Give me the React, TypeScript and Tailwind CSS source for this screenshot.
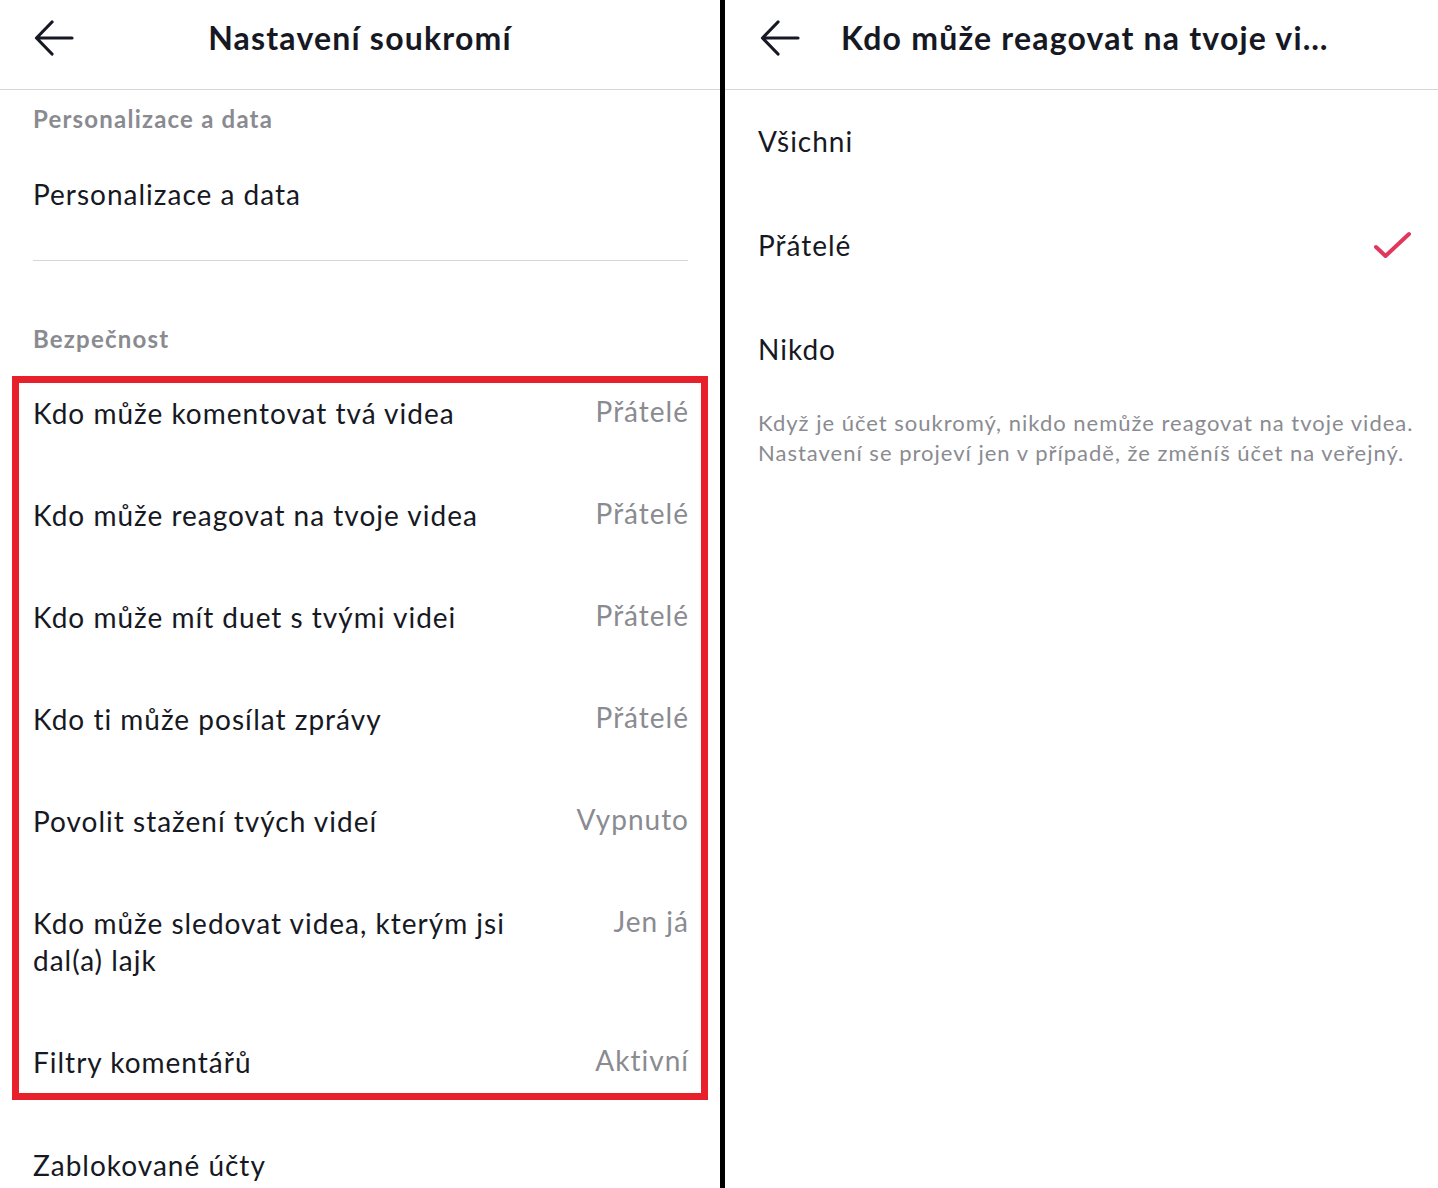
import type { ReactNode } from "react";

const font = { fontFamily: "Lato, 'Noto Sans', sans-serif" };

function BackArrow() {
  return (
    <svg width="40" height="36" viewBox="0 0 40 36" fill="none" aria-hidden="true">
      <path
        d="M38 18H3M18 2L2.5 18L18 34"
        stroke="#161823"
        strokeWidth="3.2"
        strokeLinecap="round"
        strokeLinejoin="round"
      />
    </svg>
  );
}

function Check() {
  return (
    <svg width="40" height="32" viewBox="0 0 40 32" fill="none" aria-hidden="true">
      <path
        d="M4 17L13.5 26L37 4"
        stroke="#e0385c"
        strokeWidth="4"
        strokeLinecap="round"
        strokeLinejoin="round"
      />
    </svg>
  );
}

type Setting = { label: ReactNode; value: string };

const settings: Setting[] = [
  { label: "Kdo může komentovat tvá videa", value: "Přátelé" },
  { label: "Kdo může reagovat na tvoje videa", value: "Přátelé" },
  { label: "Kdo může mít duet s tvými videi", value: "Přátelé" },
  { label: "Kdo ti může posílat zprávy", value: "Přátelé" },
  { label: "Povolit stažení tvých videí", value: "Vypnuto" },
  {
    label: (
      <>
        Kdo může sledovat videa, kterým jsi
        <br />
        dal(a) lajk
      </>
    ),
    value: "Jen já",
  },
  { label: "Filtry komentářů", value: "Aktivní" },
];

const options = [
  { label: "Všichni", checked: false },
  { label: "Přátelé", checked: true },
  { label: "Nikdo", checked: false },
];

function PrivacySettings() {
  return (
    <div className="w-[720px] shrink-0">
      <header className="relative flex h-[90px] items-center justify-center border-b border-[#d6d6d8] pb-[14px]">
        <span className="absolute left-[34px] top-[20px]">
          <BackArrow />
        </span>
        <h1 className="text-[32px] font-bold tracking-[1.2px] text-[#161823]">Nastavení soukromí</h1>
      </header>

      <div className="px-[33px]">
        <p className="pt-[14px] text-[24px] font-bold leading-[30px] tracking-[1.2px] text-[#8a8b91]">
          Personalizace a data
        </p>
        <p className="mt-[42px] text-[28px] leading-[37px] tracking-[1px] text-[#161823]">Personalizace a data</p>
        <div className="mt-[47px] mr-[-1px] h-px bg-[#d6d6d8]" />
        <p className="mt-[63px] text-[24px] font-bold leading-[30px] tracking-[1.2px] text-[#8a8b91]">Bezpečnost</p>
      </div>

      <div className="mx-[12px] mt-[22px] border-[7px] border-[#e8202c] pl-[14px] pr-[13px]">
        <div className="flex flex-col gap-[65px] py-[12px]">
          {settings.map((item) => (
            <div key={item.value + String(item.label)} className="flex items-start justify-between gap-6">
              <span className="text-[28px] leading-[37px] tracking-[1px] text-[#161823]">{item.label}</span>
              <span className="-mt-[2px] -mr-[1px] shrink-0 text-[28px] leading-[37px] tracking-[1px] text-[#8a8b91]">
                {item.value}
              </span>
            </div>
          ))}
        </div>
      </div>

      <div className="px-[33px]">
        <p className="mt-[47px] text-[28px] leading-[37px] tracking-[1px] text-[#161823]">Zablokované účty</p>
      </div>
    </div>
  );
}

function ReactionSettings() {
  return (
    <div className="min-w-0 flex-1">
      <header className="flex h-[90px] items-center border-b border-[#d6d6d8] pb-[14px]">
        <span className="ml-[35px]">
          <BackArrow />
        </span>
        <h1 className="ml-[41px] whitespace-nowrap text-[32px] font-bold tracking-[1.2px] text-[#161823]">
          Kdo může reagovat na tvoje vi…
        </h1>
      </header>

      <div className="pl-[33px] pr-[26px]">
        <ul className="flex flex-col gap-[67px] pt-[33px]">
          {options.map((option) => (
            <li key={option.label} className="flex items-center justify-between">
              <span className="text-[28px] leading-[37px] tracking-[1px] text-[#161823]">{option.label}</span>
              {option.checked && <Check />}
            </li>
          ))}
        </ul>
        <p className="mt-[40px] whitespace-nowrap text-[22px] leading-[30px] tracking-[1px] text-[#8a8b91]">
          Když je účet soukromý, nikdo nemůže reagovat na tvoje videa.
          <br />
          Nastavení se projeví jen v případě, že změníš účet na veřejný.
        </p>
      </div>
    </div>
  );
}

export default function App() {
  return (
    <div className="flex h-[1188px] w-[1438px] overflow-hidden bg-white" style={font}>
      <PrivacySettings />
      <div className="w-[5px] shrink-0 bg-black" />
      <ReactionSettings />
    </div>
  );
}
